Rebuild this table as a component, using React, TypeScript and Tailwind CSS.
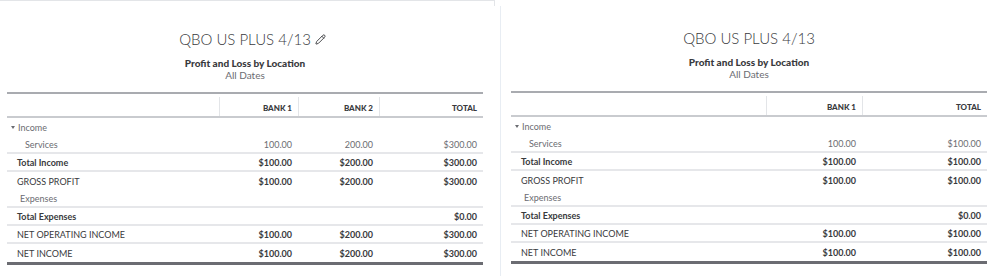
import { Pencil } from "lucide-react";

type Row = {
  label: string;
  indent: number;
  kind: "section" | "detail" | "total" | "plain";
  values: string[];
  line: boolean;
};

const leftRows: Row[] = [
  { label: "Income", indent: 0, kind: "section", values: ["", "", ""], line: false },
  { label: "Services", indent: 18, kind: "detail", values: ["100.00", "200.00", "$300.00"], line: true },
  { label: "Total Income", indent: 10, kind: "total", values: ["$100.00", "$200.00", "$300.00"], line: true },
  { label: "GROSS PROFIT", indent: 10, kind: "plain", values: ["$100.00", "$200.00", "$300.00"], line: false },
  { label: "Expenses", indent: 13, kind: "detail", values: ["", "", ""], line: true },
  { label: "Total Expenses", indent: 10, kind: "total", values: ["", "", "$0.00"], line: true },
  { label: "NET OPERATING INCOME", indent: 10, kind: "plain", values: ["$100.00", "$200.00", "$300.00"], line: true },
  { label: "NET INCOME", indent: 10, kind: "plain", values: ["$100.00", "$200.00", "$300.00"], line: false },
];

const rightRows: Row[] = leftRows.map((r) => ({
  ...r,
  values:
    r.values[2] === "$300.00"
      ? [r.values[0], "$100.00"]
      : [r.values[0], r.values[2]],
}));

function Report({
  cols,
  widths,
  rows,
  edit,
}: {
  cols: string[];
  widths: string[];
  rows: Row[];
  edit?: boolean;
}) {
  return (
    <div className="flex flex-col">
      <div className="box-content flex h-[24px] items-end justify-center pt-[26px]">
        <span className="relative text-[15px] font-light leading-[24px] text-[#393a3d]">
          QBO US PLUS 4/13
          {edit ? (
            <Pencil size={11} strokeWidth={2} className="absolute bottom-[6px] left-[calc(100%+4px)] text-[#393a3d]" />
          ) : null}
        </span>
      </div>
      <div className="mt-[6px] text-center text-[10px] font-black leading-[12px] text-[#393a3d]">
        Profit and Loss by Location
      </div>
      <div className="text-center text-[10px] leading-[13px] text-[#6b6c72]">All Dates</div>
      <div className="mt-[10px] border-t-2 border-[#a9abb0]">
        <div className="flex h-[24px] border-b-2 border-[#c9cbcf]">
          {cols.map((c, i) => (
            <div
              key={c + i}
              className={`${widths[i]} flex items-end justify-end pb-[3px] pr-[6px] text-[8px] font-black leading-[10px] text-[#393a3d] ${
                i > 0 ? "mt-[3px] border-l border-[#e3e5e8]" : ""
              }`}
            >
              {c}
            </div>
          ))}
        </div>
        {rows.map((r) => (
          <div
            key={r.label}
            className={`flex h-[18px] items-center pt-px text-[9px] ${
              r.line ? "border-b-2 border-[#e6e7ea]" : ""
            }`}
          >
            <div
              className={`${widths[0]} flex items-center ${
                r.kind === "total" ? "font-bold text-[#393a3d]" : r.kind === "plain" ? "text-[#393a3d]" : "text-[#6b6c72]"
              }`}
              style={{ paddingLeft: r.indent }}
            >
              {r.kind === "section" ? (
                <>
                  <span className="ml-[4px] mr-[3px] inline-block h-0 w-0 border-x-[2.5px] border-t-[3px] border-x-transparent border-t-[#6b6c72]" />
                  {r.label}
                </>
              ) : (
                r.label
              )}
            </div>
            {r.values.map((v, i) => (
              <div
                key={i}
                className={`${widths[i + 1]} pr-[6px] text-right ${
                  r.kind === "detail" ? "text-[#6b6c72]" : "font-bold text-[#393a3d]"
                }`}
              >
                {v}
              </div>
            ))}
          </div>
        ))}
        <div className="h-[3px] bg-[#6b6c72]" />
      </div>
    </div>
  );
}

export default function App() {
  return (
    <div className="flex h-[276px] w-[998px] bg-white" style={{ fontFamily: "Lato, 'Open Sans', sans-serif" }}>
      <div className="w-[494px] border-t border-[#e3e5e8]">
        <div className="ml-[7px] w-[476px]">
          <Report
            cols={["", "BANK 1", "BANK 2", "TOTAL"]}
            widths={["w-[212px]", "w-[79px]", "w-[81px]", "w-[104px]"]}
            rows={leftRows}
            edit
          />
        </div>
      </div>
      <div className="flex w-[6px] flex-col">
        <div className="h-[6px] w-px bg-[#e3e5e8]" />
      </div>
      <div className="mt-[6px] flex-1 border-l border-[#e8edf3]">
        <div className="-mt-[6px] ml-[10px] w-[476px]">
          <Report
            cols={["", "BANK 1", "TOTAL"]}
            widths={["w-[255px]", "w-[96px]", "w-[125px]"]}
            rows={rightRows}
          />
        </div>
      </div>
    </div>
  );
}
